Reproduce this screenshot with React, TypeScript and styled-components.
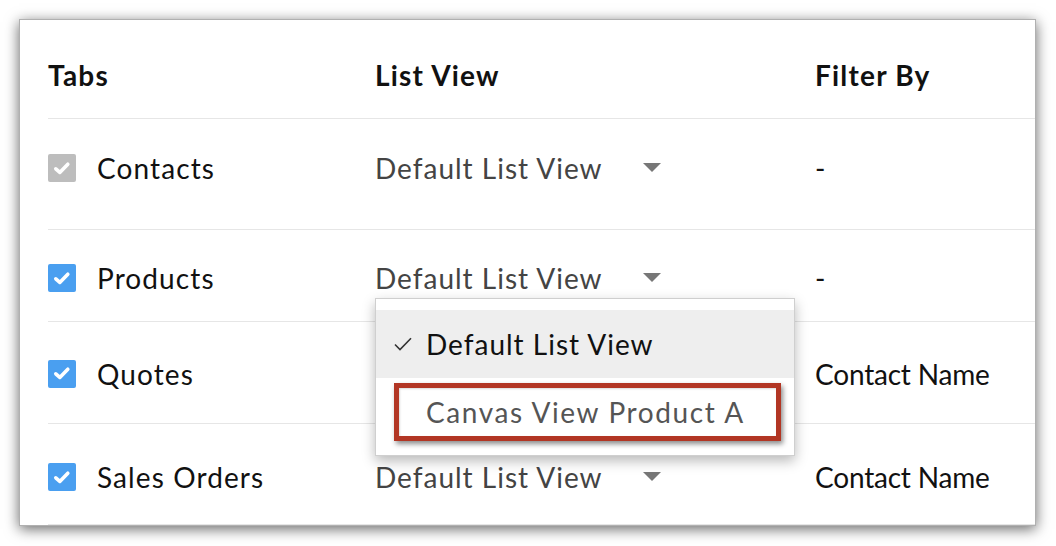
import React from "react";
import styled, { createGlobalStyle } from "styled-components";

const Global = createGlobalStyle`
  html, body { margin: 0; padding: 0; background: #ffffff; }
  body { font-family: "Lato", "Open Sans", sans-serif; -webkit-font-smoothing: antialiased; }
`;

const Page = styled.div`
  width: 1056px;
  height: 546px;
  padding: 19px 0 0 19px;
  box-sizing: border-box;
  background: #fff;
`;

const Card = styled.div`
  width: 1017px;
  height: 507px;
  box-sizing: border-box;
  background: #fff;
  border: 1px solid #b0b0b0;
  box-shadow: 0 3px 13px rgba(0, 0, 0, 0.6);
  padding-left: 28px;
  overflow: visible;
`;

const Row = styled.div<{ $h: number; $pt?: number; $pb?: number; $raised?: boolean }>`
  display: grid;
  grid-template-columns: 327px 440px 1fr;
  align-items: center;
  height: ${(p) => p.$h}px;
  box-sizing: border-box;
  padding-top: ${(p) => p.$pt ?? 0}px;
  padding-bottom: ${(p) => p.$pb ?? 0}px;
  border-bottom: 1px solid #e6e6e6;
  position: relative;
  z-index: ${(p) => (p.$raised ? 3 : "auto")};
`;

const HeadCell = styled.div`
  font-size: 28px;
  font-weight: 700;
  color: #111;
  letter-spacing: 1.2px;
`;

const TabCell = styled.div`
  display: flex;
  align-items: center;
  gap: 21px;
  font-size: 28px;
  letter-spacing: 1.1px;
  color: #111;
`;

const Box = styled.span<{ $disabled?: boolean }>`
  width: 28px;
  height: 28px;
  border-radius: 2px;
  background: ${(p) => (p.$disabled ? "#bdbdbd" : "#4a9ff0")};
  display: inline-flex;
  align-items: center;
  justify-content: center;
  flex: none;
`;

const Select = styled.div`
  position: relative;
  display: flex;
  align-items: center;
  font-size: 28px;
  letter-spacing: 1px;
  color: #444;
  height: 40px;
  width: 290px;
`;

const Caret = styled.span`
  position: absolute;
  left: 268px;
  top: 50%;
  margin-top: -5px;
  width: 0;
  height: 0;
  border-left: 9px solid transparent;
  border-right: 9px solid transparent;
  border-top: 9px solid #777;
`;

const FilterCell = styled.div`
  font-size: 28px;
  letter-spacing: -0.2px;
  color: #111;
`;

const Menu = styled.div`
  position: absolute;
  left: 0;
  top: 40px;
  width: 420px;
  height: 158px;
  box-sizing: border-box;
  background: #fff;
  border: 1px solid #cfcfcf;
  box-shadow: 0 5px 12px rgba(0, 0, 0, 0.28);
  padding-top: 11px;
  z-index: 5;
`;

const MenuItem = styled.div<{ $active?: boolean; $h: number }>`
  position: relative;
  height: ${(p) => p.$h}px;
  display: flex;
  align-items: center;
  padding-left: 18px;
  gap: 14px;
  font-size: 28px;
  letter-spacing: ${(p) => (p.$active ? 1 : 1.6)}px;
  background: ${(p) => (p.$active ? "#eeeeee" : "transparent")};
  color: ${(p) => (p.$active ? "#111" : "#555")};
`;

const Spacer = styled.span`
  width: 18px;
  flex: none;
`;

const Highlight = styled.div`
  position: absolute;
  left: 18px;
  top: 5px;
  width: 387px;
  height: 58px;
  box-sizing: border-box;
  border: 5px solid #b23624;
  box-shadow: 2px 3px 5px rgba(0, 0, 0, 0.45), inset 1px 1px 2px rgba(0, 0, 0, 0.15);
`;

const Check = () => (
  <svg width="18" height="15" viewBox="0 0 18 15">
    <path d="M2.8 7.8 L6.8 11.4 L14.8 3.2" fill="none" stroke="#fff" strokeWidth="3.6" strokeLinecap="round" strokeLinejoin="round" />
  </svg>
);

const ThinCheck = () => (
  <svg width="18" height="14" viewBox="0 0 18 14">
    <path d="M1 7.5 L6 12.5 L17 1.2" fill="none" stroke="#333" strokeWidth="1.6" />
  </svg>
);

type Tab = {
  name: string;
  disabled?: boolean;
  filter: string;
  h: number;
  pt?: number;
  pb?: number;
  menu?: boolean;
  select: boolean;
};

const rows: Tab[] = [
  { name: "Contacts", disabled: true, filter: "-", h: 111, pb: 12, select: true },
  { name: "Products", filter: "-", h: 92, pt: 5, menu: true, select: true },
  { name: "Quotes", filter: "Contact Name", h: 102, pt: 2, select: false },
  { name: "Sales Orders", filter: "Contact Name", h: 101, pt: 6, select: true },
];

export default function App() {
  return (
    <Page>
      <Global />
      <Card>
        <Row $h={99} $pt={12}>
          <HeadCell>Tabs</HeadCell>
          <HeadCell>List View</HeadCell>
          <HeadCell>Filter By</HeadCell>
        </Row>
        {rows.map((r) => (
          <Row key={r.name} $h={r.h} $pt={r.pt} $pb={r.pb} $raised={r.menu}>
            <TabCell>
              <Box $disabled={r.disabled}>
                <Check />
              </Box>
              {r.name}
            </TabCell>
            <div>
              {r.select && (
                <Select>
                  Default List View
                  <Caret />
                  {r.menu && (
                    <Menu>
                      <MenuItem $active $h={68}>
                        <ThinCheck />
                        Default List View
                      </MenuItem>
                      <MenuItem $h={67}>
                        <Spacer />
                        Canvas View Product A
                        <Highlight />
                      </MenuItem>
                    </Menu>
                  )}
                </Select>
              )}
            </div>
            <FilterCell>{r.filter}</FilterCell>
          </Row>
        ))}
      </Card>
    </Page>
  );
}
